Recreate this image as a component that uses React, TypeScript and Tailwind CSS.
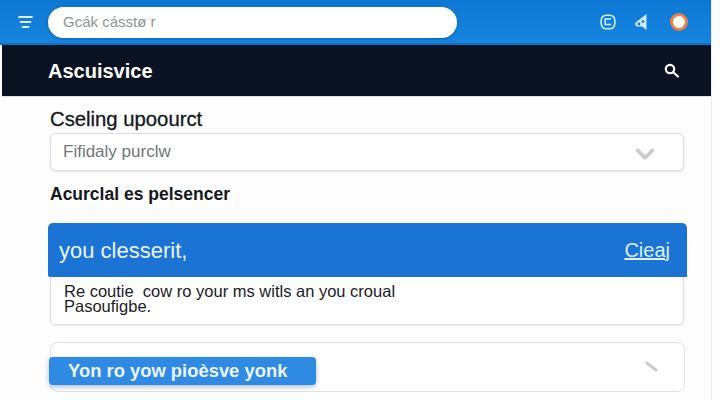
import React from "react";
import { ChevronDown } from "lucide-react";

const font = "font-['Liberation_Sans',Arial,sans-serif]";

export default function App() {
  return (
    <div className={`w-[720px] h-[400px] overflow-hidden bg-[#fdfdfd] ${font}`}>
      <div className="w-[712px] h-[400px] border-r border-[#e9ebee] flex flex-col">
        <header className="h-[45px] shrink-0 bg-gradient-to-b from-[#0c78d4] to-[#1585e0] border-b-2 border-[#0f6fc0] flex items-center pl-[18px] pr-[23px]">
          <svg width="15" height="14" viewBox="0 0 15 14" className="shrink-0 mr-[15px]">
            <path d="M1 2h13M2.5 7h10M4.5 12h6" stroke="#d8f0ff" strokeWidth="1.8" strokeLinecap="round" />
          </svg>
          <div className="w-[409px] h-[31px] mt-[1px] rounded-full bg-white shadow-[0_1px_3px_rgba(0,40,90,0.4)] flex items-center pl-[15px] text-[15px] text-[#8e9499]">
            Gcák cásstø r
          </div>
          <div className="ml-auto flex items-center">
            <svg width="16" height="16" viewBox="0 0 16 16" className="mr-[18px]">
              <rect x="1.2" y="1.2" width="13.6" height="13.6" rx="5" fill="none" stroke="#d5efff" strokeWidth="1.6" />
              <path d="M11 5H5.2v5.5H11" fill="none" stroke="#d5efff" strokeWidth="1.5" />
            </svg>
            <svg width="14" height="18" viewBox="0 0 14 18" className="mr-[22px]">
              <path d="M12.5 1v16L8 13.5H3.5a2.5 2.5 0 0 1-1-4.7z" fill="#cfeaff" />
              <circle cx="5" cy="11" r="1.4" fill="#1a70b8" />
              <circle cx="9" cy="8.5" r="1.3" fill="#1a70b8" />
            </svg>
            <div className="w-[18px] h-[18px] rounded-full bg-white border-[3px] border-[#ef7f3f]" />
          </div>
        </header>

        <div className="h-[52px] shrink-0 ml-[2px] bg-[#0b1322] border-b border-[#dfe2e6] flex items-center pl-[46px] pr-[31px]">
          <span className="text-[20px] font-bold text-white">Ascuisvice</span>
          <svg width="17" height="17" viewBox="0 0 17 17" className="ml-auto">
            <circle cx="7" cy="7" r="4.2" fill="none" stroke="#fff" strokeWidth="2.2" />
            <path d="M10.5 10.5L15 14.5" stroke="#fff" strokeWidth="2.2" strokeLinecap="round" />
          </svg>
        </div>

        <main className="flex-1 flex flex-col pl-[48px] pr-[24px] min-h-0">
          <h2 className="ml-[2px] mt-[12px] h-[20px] leading-[20px] text-[20.3px] text-[#15181c] [-webkit-text-stroke:0.3px_#15181c]">Cseling upoourct</h2>
          <div className="ml-[2px] mt-[4px] mr-[3px] h-[38px] shrink-0 rounded-[5px] bg-white border border-[#dcdee0] shadow-[0_1px_2px_rgba(0,0,0,0.1)] flex items-center pl-[12px] pr-[23px]">
            <span className="text-[17px] text-[#70767c]">Fifidaly purclw</span>
            <ChevronDown className="ml-auto mt-[3px] text-[#c9cbcc]" size={30} strokeWidth={3} />
          </div>
          <h3 className="ml-[2px] mt-[14px] h-[18px] leading-[18px] text-[17.5px] font-bold text-[#15181c]">Acurclal es pelsencer</h3>

          <div className="mt-[20px] h-[54px] shrink-0 rounded-t-[5px] rounded-bl-[2px] bg-[#1b74d3] flex items-center pl-[11px] pr-[17px]">
            <span className="text-[22px] text-[#e8f4ff]">you clesserit,</span>
            <span className="ml-auto text-[20px] text-[#dcefff] underline">Cieaj</span>
          </div>
          <div className="ml-[2px] mr-[3px] h-[48px] shrink-0 rounded-b-[5px] bg-white border border-t-0 border-[#dcdee0] shadow-[0_1px_2px_rgba(0,0,0,0.08)] pl-[13px] pt-[7px] text-[16.5px] leading-[15px] text-[#1a1c1f]">
            Re coutie&nbsp; cow ro your ms witls an you croual
            <br />
            Pasoufigbe.
          </div>

          <div className="ml-[2px] mr-[2px] mt-[17px] h-[50px] shrink-0 rounded-[8px] bg-white border border-[#dfe1e3] flex items-start pt-[14px] pr-[25px]">
            <div className="-ml-[2px] w-[267px] h-[28px] rounded-[4px] bg-[#2f8ae4] shadow-[0_2px_5px_rgba(20,70,130,0.35)] flex items-center pl-[19px] text-[18.4px] font-bold text-[#eaf5ff]">
              Yon ro yow pioèsve yonk
            </div>
            <svg width="14" height="12" viewBox="0 0 14 12" className="ml-auto mt-[4px]">
              <path d="M2 2l9 7" stroke="#c9cbcd" strokeWidth="3" strokeLinecap="round" />
            </svg>
          </div>
        </main>
      </div>
    </div>
  );
}
